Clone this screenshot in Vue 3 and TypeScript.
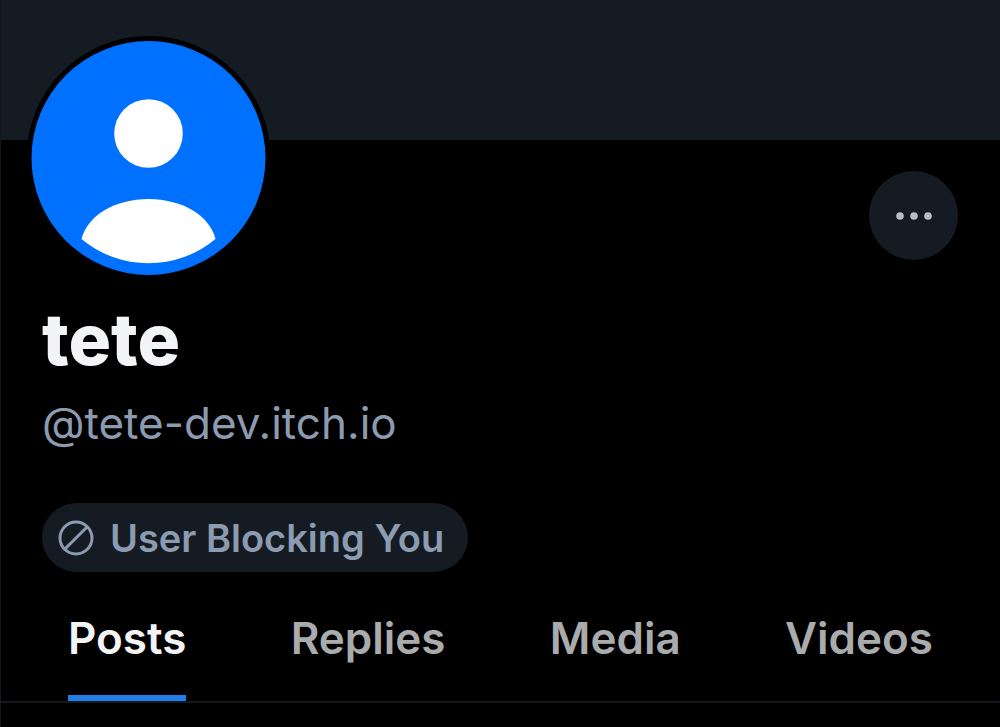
<script setup lang="ts">
import { ref } from 'vue'

const tabs: string[] = ['Posts', 'Replies', 'Media', 'Videos']
const active = ref<string>('Posts')
</script>

<template>
  <main class="profile">
    <div class="banner"></div>
    <header class="top">
      <svg class="avatar" viewBox="0 0 246 246" role="img" aria-label="Avatar">
        <circle cx="122.5" cy="123" r="122" fill="#000" />
        <circle cx="122.5" cy="123" r="117" fill="#0070ff" />
        <circle cx="122.5" cy="98.5" r="34.3" fill="#fff" />
        <path d="M55.5 204C61.5 180 89.5 164 122.5 164S183.5 180 189.5 204A104.5 104.5 0 0 1 55.5 204Z" fill="#fff" />
      </svg>
      <button class="more" type="button" aria-label="More options">
        <svg viewBox="0 0 36 8" aria-hidden="true">
          <circle cx="4" cy="4" r="3.8" />
          <circle cx="18" cy="4" r="3.8" />
          <circle cx="32" cy="4" r="3.8" />
        </svg>
      </button>
    </header>
    <section class="info">
      <h1>tete</h1>
      <p class="handle">@tete-dev.itch.io</p>
      <button class="label" type="button">
        <svg viewBox="0 0 36 36" aria-hidden="true">
          <circle cx="18" cy="18" r="16" />
          <path d="M29.3 6.7L6.7 29.3" />
        </svg>
        <span>User Blocking You</span>
      </button>
    </section>
    <nav class="tabs" role="tablist">
      <button
        v-for="tab in tabs"
        :key="tab"
        type="button"
        role="tab"
        :aria-selected="active === tab"
        :class="{ active: active === tab }"
        @click="active = tab"
      >{{ tab }}</button>
    </nav>
  </main>
</template>

<style>
body {
  margin: 0;
  background: #000;
}
</style>

<style scoped>
.profile {
  box-sizing: border-box;
  min-height: 100vh;
  border-left: 1px solid #14171b;
  background: #000;
  color: #f3f4f6;
  font-family: Inter, "Liberation Sans", sans-serif;
}
button {
  margin: 0;
  border: 0;
  font-family: inherit;
  cursor: pointer;
}
.banner {
  height: 140px;
  background: #141b22;
}
.top {
  display: flex;
  justify-content: space-between;
  align-items: flex-end;
  margin-top: -105px;
  padding: 0 42px 0 25px;
}
.avatar {
  width: 246px;
  height: 246px;
}
.more {
  display: flex;
  align-items: center;
  justify-content: center;
  width: 89px;
  height: 89px;
  margin-bottom: 21px;
  padding: 0;
  border-radius: 50%;
  background: #141b22;
}
.more svg {
  width: 36px;
  fill: #b5bdca;
}
.info {
  display: flex;
  flex-direction: column;
  align-items: flex-start;
  padding: 18px 41px 0;
}
h1 {
  margin: 0;
  font-size: 71px;
  font-weight: 800;
  line-height: 80px;
}
.handle {
  margin: 18px 0 0;
  color: #8c9bb0;
  font-size: 44px;
  line-height: 52px;
}
.label {
  display: flex;
  align-items: center;
  gap: 16px;
  height: 69px;
  margin-top: 54px;
  padding: 0 24px 0 16px;
  border-radius: 35px;
  background: #141b22;
  color: #8c9bb0;
  font-size: 38px;
  font-weight: 600;
}
.label svg {
  width: 36px;
  height: 36px;
  fill: none;
  stroke: currentColor;
  stroke-width: 3;
}
.tabs {
  display: flex;
  justify-content: space-between;
  margin-top: 40px;
  padding: 0 67px;
  border-bottom: 2px solid #15181d;
}
.tabs button {
  padding: 0 0 31px;
  border-bottom: 6px solid transparent;
  background: none;
  color: #a9abad;
  font-size: 44px;
  font-weight: 600;
  line-height: 52px;
}
.tabs button.active {
  border-color: #2080e8;
  color: #f3f4f6;
}
</style>
